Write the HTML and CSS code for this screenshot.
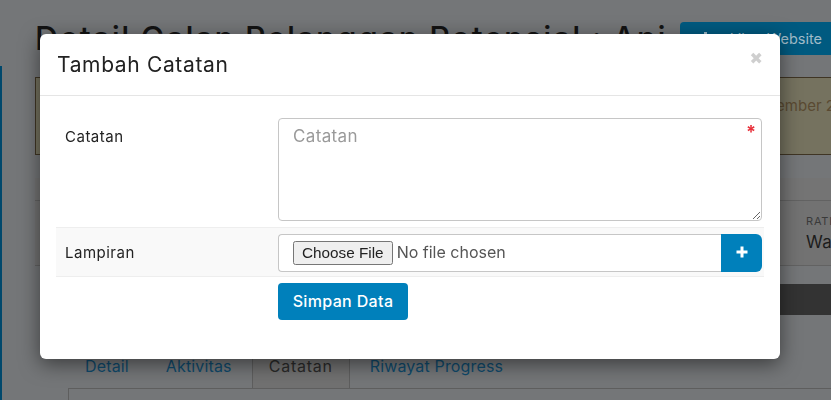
FILE: index.html
```html
<!DOCTYPE html>
<html lang="id">
<head>
<meta charset="utf-8">
<title>Tambah Catatan</title>
<link rel="stylesheet" href="styles.css">
</head>
<body>
<div class="page">
  <aside class="rail"></aside>
  <main class="content">
    <header class="head">
      <h1 class="title">Detail Galan Pelanggan Potensial : Ani</h1>
      <a class="site-btn">
        <svg class="site-icon" viewBox="0 0 16 16" width="16" height="16"><path d="M1 3h9l2 2v9H1zM12 1h3v3h-3z" fill="#a0bcc9"/></svg>
        <span>Lihat Website</span>
      </a>
    </header>
    <div class="notice"><span>Data ini dibuat pada tanggal 12 Desember 2022</span></div>
    <section class="info">
      <div class="rating"><small>RATING</small><strong>Warm</strong></div>
    </section>
    <div class="dark-bar"></div>
    <nav class="tabs">
      <a class="tab">Detail</a>
      <a class="tab">Aktivitas</a>
      <a class="tab tab-active">Catatan</a>
      <a class="tab">Riwayat Progress</a>
    </nav>
    <div class="tab-body"></div>
  </main>
</div>
<div class="modal">
  <div class="modal-head">
    <h2 class="modal-title">Tambah Catatan</h2>
    <span class="close">&#10006;</span>
  </div>
  <form class="modal-body">
    <div class="row row-note">
      <label class="label">Catatan</label>
      <div class="field field-note">
        <textarea class="note" placeholder="Catatan"></textarea>
        <span class="req">*</span>
      </div>
    </div>
    <div class="row row-file">
      <label class="label">Lampiran</label>
      <div class="field file-group">
        <input class="file" type="file">
        <button class="add" type="button" aria-label="Tambah">
          <svg class="add-icon" viewBox="0 0 12 12" width="12" height="12"><path d="M4.5 0.5h3v4h4v3h-4v4h-3v-4h-4v-3h4z" fill="#fff"/></svg>
        </button>
      </div>
    </div>
    <div class="row row-save">
      <span></span>
      <div class="field"><button class="save" type="button">Simpan Data</button></div>
    </div>
  </form>
</div>
</body>
</html>
```
FILE: styles.css
```css
* { box-sizing: border-box; }
html, body { margin: 0; height: 100%; overflow: hidden; }
body { font-family: "Inter", "Liberation Sans", sans-serif; background: #747678; color: #212529; }

.page { display: flex; height: 400px; overflow: hidden; }
.rail { width: 2px; flex: none; margin-top: 66px; background: #00486c; }
.content { flex: 1; min-width: 0; padding: 22px 0 0 33px; }
.head { display: flex; justify-content: space-between; align-items: flex-start; height: 55px; }
.title { margin: 0; font-size: 32px; line-height: 34px; font-weight: 500; letter-spacing: 1.4px; white-space: nowrap; color: #131313; }
.site-btn { flex: none; width: 151px; height: 33px; display: flex; align-items: center; justify-content: space-between; padding: 0 9px 0 12px; background: #005a80; color: #a0bcc9; border-radius: 4px 0 0 4px; font-size: 14.5px; white-space: nowrap; }
.site-icon { display: block; }
.notice { height: 78px; padding: 18px 0 0 0; text-indent: 491px; margin-right: -20px; background: #75725f; border: 1px solid #3f3524; color: #5a4a32; font-size: 15px; white-space: nowrap; overflow: hidden; }
.info { height: 88px; margin-top: 23px; padding: 36px 0 0 771px; background: #727272; box-shadow: inset 0 22px 0 #747474, inset 0 23px 0 #626262; border-bottom: 1px solid #626262; overflow: hidden; }
.rating small { display: block; font-size: 11px; line-height: 14px; letter-spacing: .8px; color: #3a3a3a; }
.rating strong { display: block; font-weight: 400; font-size: 17px; line-height: 20px; margin-top: 4px; letter-spacing: .4px; color: #1c1c1c; }
.dark-bar { height: 31px; margin: 18px 0 0 20px; background: #333; }
.tabs { display: flex; gap: 3px; margin: 35px 0 0 33px; height: 38px; font-size: 16px; letter-spacing: .15px; }
.tab { padding: 6px 17px 0; color: #0f4a6c; }
.tab-active { padding: 6px 16px 0; letter-spacing: .75px; color: #2a2a2a; background: #717171; border: 1px solid #5e5e5e; border-top: 0; border-bottom: 0; }
.tab-body { margin-left: 33px; height: 20px; border: 1px solid #5e5e5e; border-right: 0; }

.modal { position: fixed; left: 40px; top: 34px; width: 740px; height: 325px; background: #fff; border-radius: 6px; box-shadow: 0 5px 20px rgba(0, 0, 0, .5); }
.modal-head { height: 62px; display: flex; align-items: flex-start; justify-content: space-between; padding: 0 17px; border-bottom: 1px solid #e5e5e5; }
.modal-title { margin: 19px 0 0; font-size: 21px; line-height: 24px; font-weight: 400; letter-spacing: .65px; color: #222; }
.close { margin: 15px 0 0 0; font-family: "DejaVu Sans", sans-serif; font-size: 16px; line-height: 20px; color: #cfcfcf; }

.modal-body { padding: 22px 16px 0; }
.row { display: grid; grid-template-columns: 213px 484px; padding-left: 9px; }
.row-note { height: 109px; }
.row-file { height: 50px; padding-top: 6px; background: #f9f9f9; border-top: 1px solid #eee; border-bottom: 1px solid #eee; }
.row-save { padding-top: 6px; }
.label { font-size: 15px; line-height: 20px; padding-top: 9px; letter-spacing: .5px; color: #222; }

.field { position: relative; }
.field-note { height: 103px; }
.note { display: block; width: 484px; height: 103px; padding: 5px 14px; border: 1px solid #c6c6c6; border-radius: 4px; font: 17px/24px "Inter", sans-serif; letter-spacing: .35px; color: #333; outline: 0; resize: both; }
.note::placeholder { color: #9a9a9a; opacity: 1; }
.req { position: absolute; right: 6px; top: 6px; color: #e8323c; font-size: 18px; line-height: 16px; font-weight: 700; }

.file-group { display: flex; height: 38px; }
.file { flex: 1; min-width: 0; height: 38px; padding: 5px 14px 7px; background: #fff; border: 1px solid #c6c6c6; border-right: 0; border-radius: 4px 0 0 4px; font: 16px/24px "Inter", sans-serif; color: #555; }
.file::file-selector-button { font: 15.3px "Liberation Sans", Arial, sans-serif; color: #222; padding: 1px 7px; margin-right: 4px; }
.add { width: 41px; flex: none; display: flex; align-items: center; justify-content: center; padding: 0 0 3px; background: #0080bb; border: 0; border-radius: 0 6px 6px 0; }
.add-icon { display: block; }

.save { width: 130px; height: 37px; padding: 0; background: #0080bb; border: 0; border-radius: 4px; color: #fff; font: 500 16px/37px "Inter", sans-serif; letter-spacing: .35px; }
```
